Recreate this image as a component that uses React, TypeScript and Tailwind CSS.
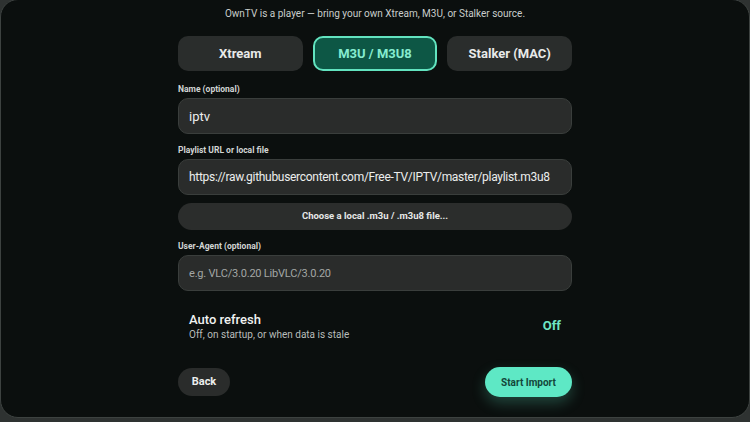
import React, { useState } from "react";

type SourceKind = "xtream" | "m3u" | "stalker";

const sourceTabs: { id: SourceKind; label: string }[] = [
  { id: "xtream", label: "Xtream" },
  { id: "m3u", label: "M3U / M3U8" },
  { id: "stalker", label: "Stalker (MAC)" },
];

const FieldLabel: React.FC<{ children: React.ReactNode }> = ({ children }) => (
  <div className="mb-[3px] text-[8.5px] font-bold leading-[12px] text-[#d2d5d4]">{children}</div>
);

const TextField: React.FC<{ value?: string; placeholder?: string; className?: string }> = ({
  value,
  placeholder,
  className = "",
}) => (
  <input
    readOnly
    value={value}
    placeholder={placeholder}
    className={
      "h-[36px] w-full rounded-[10px] border border-[#3a3e3c] bg-[#2a2c2b] px-[10px] text-[#eceeed] outline-none placeholder:text-[#a3a7a5] " +
      className
    }
  />
);

const App: React.FC = () => {
  const [kind, setKind] = useState<SourceKind>("m3u");

  return (
    <div
      className="h-[422px] w-[750px] overflow-hidden bg-[#2e3231]"
      style={{ fontFamily: "Roboto, 'Noto Sans', sans-serif" }}
    >
      <div className="-mt-[1px] h-[419px] overflow-hidden rounded-[18px] border border-[#3d4240] bg-[#0b0f0e]">
        <div className="flex flex-col items-center pt-[7px]">
          <p className="text-[10px] leading-[14px] text-[#c9cdcb]">
            OwnTV is a player — bring your own Xtream, M3U, or Stalker source.
          </p>

          <div className="w-[394px]">
            {/* source type picker */}
            <div className="mt-[15px] flex gap-[10px]">
              {sourceTabs.map((tab) => {
                const active = tab.id === kind;
                return (
                  <button
                    key={tab.id}
                    onClick={() => setKind(tab.id)}
                    className={
                      active
                        ? "h-[35px] flex-1 rounded-[10px] border-2 border-[#62e3bf] bg-[#0d5745] text-[13px] font-bold text-[#86ecd0]"
                        : "h-[35px] flex-1 rounded-[10px] border-2 border-transparent bg-[#2a2d2c] text-[13px] font-bold text-[#e8eae9]"
                    }
                  >
                    {tab.label}
                  </button>
                );
              })}
            </div>

            <div className="mt-[12px]">
              <FieldLabel>Name (optional)</FieldLabel>
              <TextField value="iptv" className="text-[13px]" />
            </div>

            <div className="mt-[10px]">
              <FieldLabel>Playlist URL or local file</FieldLabel>
              <TextField
                value="https://raw.githubusercontent.com/Free-TV/IPTV/master/playlist.m3u8"
                className="text-[12px] tracking-[-0.3px]"
              />
            </div>

            <button className="mt-[8px] h-[27px] w-full rounded-full bg-[#2b2d2c] text-[9.5px] font-bold text-[#e6e8e7]">
              Choose a local .m3u / .m3u8 file...
            </button>

            <div className="mt-[10px]">
              <FieldLabel>User-Agent (optional)</FieldLabel>
              <TextField placeholder="e.g. VLC/3.0.20 LibVLC/3.0.20" className="text-[11px] tracking-[-0.2px]" />
            </div>

            {/* auto refresh row */}
            <div className="mt-[20px] flex items-center justify-between px-[11px]">
              <div>
                <div className="text-[13px] font-medium leading-[17px] text-[#f0f2f1]">Auto refresh</div>
                <div className="text-[10px] leading-[13px] text-[#b9bdbb]">
                  Off, on startup, or when data is stale
                </div>
              </div>
              <div className="text-[13px] font-bold text-[#6fe6c4]">Off</div>
            </div>

            <div className="mt-[26px] flex items-center justify-between">
              <button className="h-[28px] w-[52px] rounded-full bg-[#2a2c2b] text-[11px] font-bold text-[#eceeed]">
                Back
              </button>
              <button className="h-[30px] w-[87px] rounded-full bg-[#5ee8c5] text-[10px] font-bold text-[#14463a] shadow-[0_6px_14px_rgba(94,232,197,0.25)]">
                Start Import
              </button>
            </div>
          </div>
        </div>
      </div>
    </div>
  );
};

export default App;
